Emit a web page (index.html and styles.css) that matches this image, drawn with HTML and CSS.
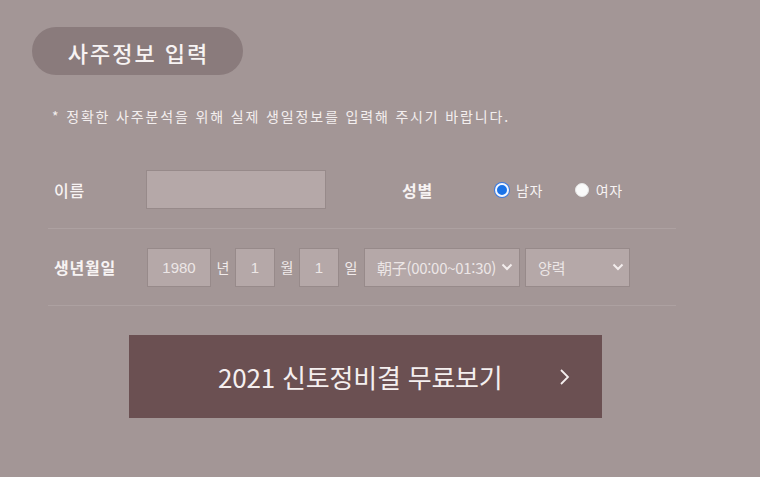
FILE: index.html
```html
<!DOCTYPE html>
<html lang="ko">
<head>
<meta charset="utf-8">
<link rel="stylesheet" href="styles.css">
</head>
<body>
<div class="page">
  <div class="title-pill">사주정보 입력</div>
  <p class="note">* 정확한 사주분석을 위해 실제 생일정보를 입력해 주시기 바랍니다.</p>
  <div class="form">
    <div class="row">
      <span class="label label-name">이름</span>
      <div class="field name-field"></div>
      <span class="label label-gender">성별</span>
      <div class="radios">
        <span class="radio checked"></span><span class="radio-text first">남자</span>
        <span class="radio"></span><span class="radio-text">여자</span>
      </div>
    </div>
    <div class="row">
      <span class="label label-birth">생년월일</span>
      <div class="field num year">1980</div>
      <span class="unit">년</span>
      <div class="field num small">1</div>
      <span class="unit">월</span>
      <div class="field num small">1</div>
      <span class="unit">일</span>
      <div class="field select time"><span>朝子(00:00~01:30)</span><svg class="chev" width="12" height="8" viewBox="0 0 12 8"><path d="M1.5 1.5 L6 6 L10.5 1.5" fill="none" stroke="#f3eded" stroke-width="2"/></svg></div>
      <div class="field select cal"><span>양력</span><svg class="chev" width="12" height="8" viewBox="0 0 12 8"><path d="M1.5 1.5 L6 6 L10.5 1.5" fill="none" stroke="#f3eded" stroke-width="2"/></svg></div>
    </div>
  </div>
  <div class="btn-wrap">
    <div class="btn"><span class="btn-text">2021 신토정비결 무료보기</span><svg class="btn-chev" width="11" height="18" viewBox="0 0 11 18"><path d="M2 2 L9 9 L2 16" fill="none" stroke="#f5efef" stroke-width="1.8"/></svg></div>
  </div>
</div>
</body>
</html>
```
FILE: styles.css
```css
* { box-sizing: border-box; }
body {
  margin: 0;
  background: #a39696;
  font-family: "Noto Sans CJK KR", "Noto Sans", sans-serif;
  color: #fff;
}
.page {
  width: 760px;
  height: 477px;
  padding: 27px 0 0 32px;
}
.title-pill {
  width: 211px;
  height: 48px;
  border-radius: 24px;
  background: #8a7b7c;
  display: flex;
  align-items: center;
  justify-content: center;
  font-size: 22px;
  font-weight: 500;
  color: #f7f3f3;
  letter-spacing: 2px;
  padding-top: 1px;
  padding-left: 2px;
}
.note {
  margin: 32px 0 0 20px;
  font-size: 14px;
  color: #f3eeee;
  line-height: 18px;
  letter-spacing: 1.85px;
}
.form {
  margin: 27px 0 0 16px;
  width: 628px;
}
.row {
  height: 77px;
  display: flex;
  align-items: center;
  border-bottom: 1px solid #ada1a1;
}
.label {
  font-size: 16px;
  color: #f7f3f3;
  font-weight: 700;
  padding-left: 6px;
  letter-spacing: 0.8px;
}
.label-name { width: 98px; font-weight: 500; }
.label-birth { width: 99px; }
.label-gender { margin-left: 70px; width: 99px; }
.field {
  height: 39px;
  background: #b5a8a8;
  border: 1px solid #978a8a;
  color: #ece6e6;
  font-size: 15px;
  font-family: "Liberation Sans", "Noto Sans CJK KR", sans-serif;
}
.name-field { width: 180px; margin-top: -2px; }
.radios {
  display: flex;
  align-items: center;
}
.radio {
  width: 14px;
  height: 14px;
  border-radius: 50%;
  background: #fafafa;
  border: 1px solid #e6e6e6;
}
.radio.checked {
  background: #1a73e8;
  border: 2.5px solid #f3f7ff;
  box-shadow: 0 0 0 1px #3c7be0;
}
.radio-text {
  font-size: 14px;
  color: #f7f3f3;
  margin-left: 7px;
  letter-spacing: 0.5px;
}
.radio-text.first { margin-right: 32px; }
.num {
  display: flex;
  align-items: center;
  justify-content: center;
}
.year { width: 64px; }
.small { width: 40px; }
.unit {
  font-size: 14px;
  color: #f1ebeb;
  width: 24px;
  text-align: center;
}
.select {
  display: flex;
  align-items: center;
  justify-content: space-between;
  padding: 0 6px 0 12px;
  font-family: "Noto Sans CJK KR", sans-serif;
  font-size: 15px;
}
.time { width: 156px; margin-left: 1px; letter-spacing: -0.3px; }
.cal { width: 105px; margin-left: 5px; padding-right: 5px; }
.chev { display: block; flex: none; }
.btn-wrap {
  margin: 29px 0 0 97px;
}
.btn {
  width: 473px;
  height: 83px;
  background: #6b5052;
  display: flex;
  align-items: center;
}
.btn-text {
  font-size: 26px;
  color: #f5efef;
  margin-left: 89px;
  letter-spacing: -0.2px;
}
.btn-chev {
  margin-left: 56px;
  flex: none;
}
```
